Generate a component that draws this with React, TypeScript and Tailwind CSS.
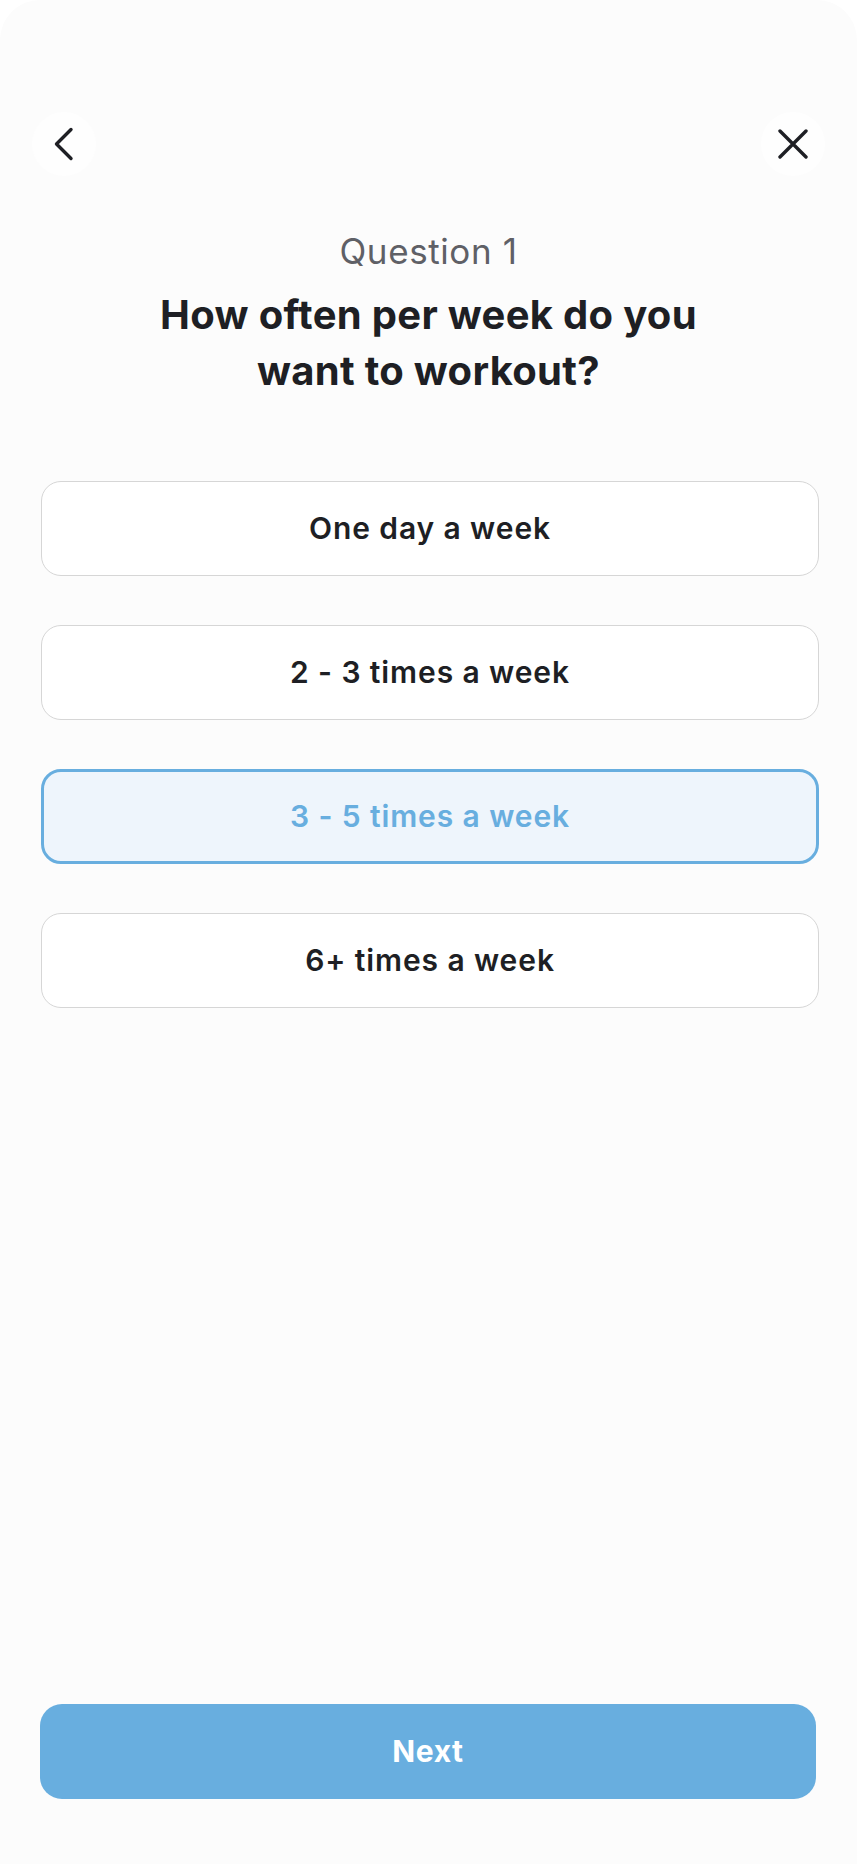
import React, { useState } from "react";

const options = ["One day a week", "2 - 3 times a week", "3 - 5 times a week", "6+ times a week"];

export default function App() {
  const [selected, setSelected] = useState(2);
  return (
    <div className="min-h-[1864px] w-full bg-white" style={{ fontFamily: "Inter, 'Noto Sans', sans-serif" }}>
      <div className="flex min-h-[1864px] w-[857px] flex-col rounded-t-[40px] bg-[#fcfcfc]">
        <div className="flex items-center justify-between px-[32px] pt-[112px]">
          <button className="flex h-[64px] w-[64px] items-center justify-center rounded-full bg-[#fefefe]">
            <svg width="20" height="34" viewBox="0 0 20 34" fill="none">
              <path d="M17 2.5 L2.5 17 L17 31.5" stroke="#1e1f24" strokeWidth="3.4" strokeLinecap="round" strokeLinejoin="round" />
            </svg>
          </button>
          <button className="flex h-[64px] w-[64px] items-center justify-center rounded-full bg-[#fefefe]">
            <svg width="30" height="30" viewBox="0 0 30 30" fill="none">
              <path d="M2 2 L28 28 M28 2 L2 28" stroke="#1e1f24" strokeWidth="3.4" strokeLinecap="round" />
            </svg>
          </button>
        </div>

        <div className="mt-[57px] text-center text-[35px] leading-[36px] tracking-[0.6px] text-[#5f6066]">Question 1</div>
        <h1 className="mx-auto mt-[18px] text-center text-[40px] font-bold leading-[56px] tracking-[0.3px] text-[#1e1f24]">
          How often per week do you
          <br />
          want to workout?
        </h1>

        <div className="mt-[82px] flex flex-col gap-[49px] pl-[41px] pr-[38px]">
          {options.map((o, i) => {
            const active = i === selected;
            return (
              <button
                key={o}
                onClick={() => setSelected(i)}
                className={
                  active
                    ? "flex h-[95px] items-center justify-center rounded-[20px] border-[3px] border-[#68aedf] bg-[#eef5fc] text-[30px] font-semibold tracking-[0.9px] text-[#68aedf]"
                    : "flex h-[95px] items-center justify-center rounded-[20px] border-[1.5px] border-[#d6d6d6] bg-white text-[30px] font-semibold tracking-[0.9px] text-[#1e1f24]"
                }
              >
                {o}
              </button>
            );
          })}
        </div>

        <div className="flex-1" />

        <div className="px-[40px] pb-[65px]">
          <button className="flex h-[95px] w-[776px] items-center justify-center rounded-[22px] bg-[#68aedf] text-[30px] font-bold tracking-[0.6px] text-white">
            Next
          </button>
        </div>
      </div>
    </div>
  );
}
